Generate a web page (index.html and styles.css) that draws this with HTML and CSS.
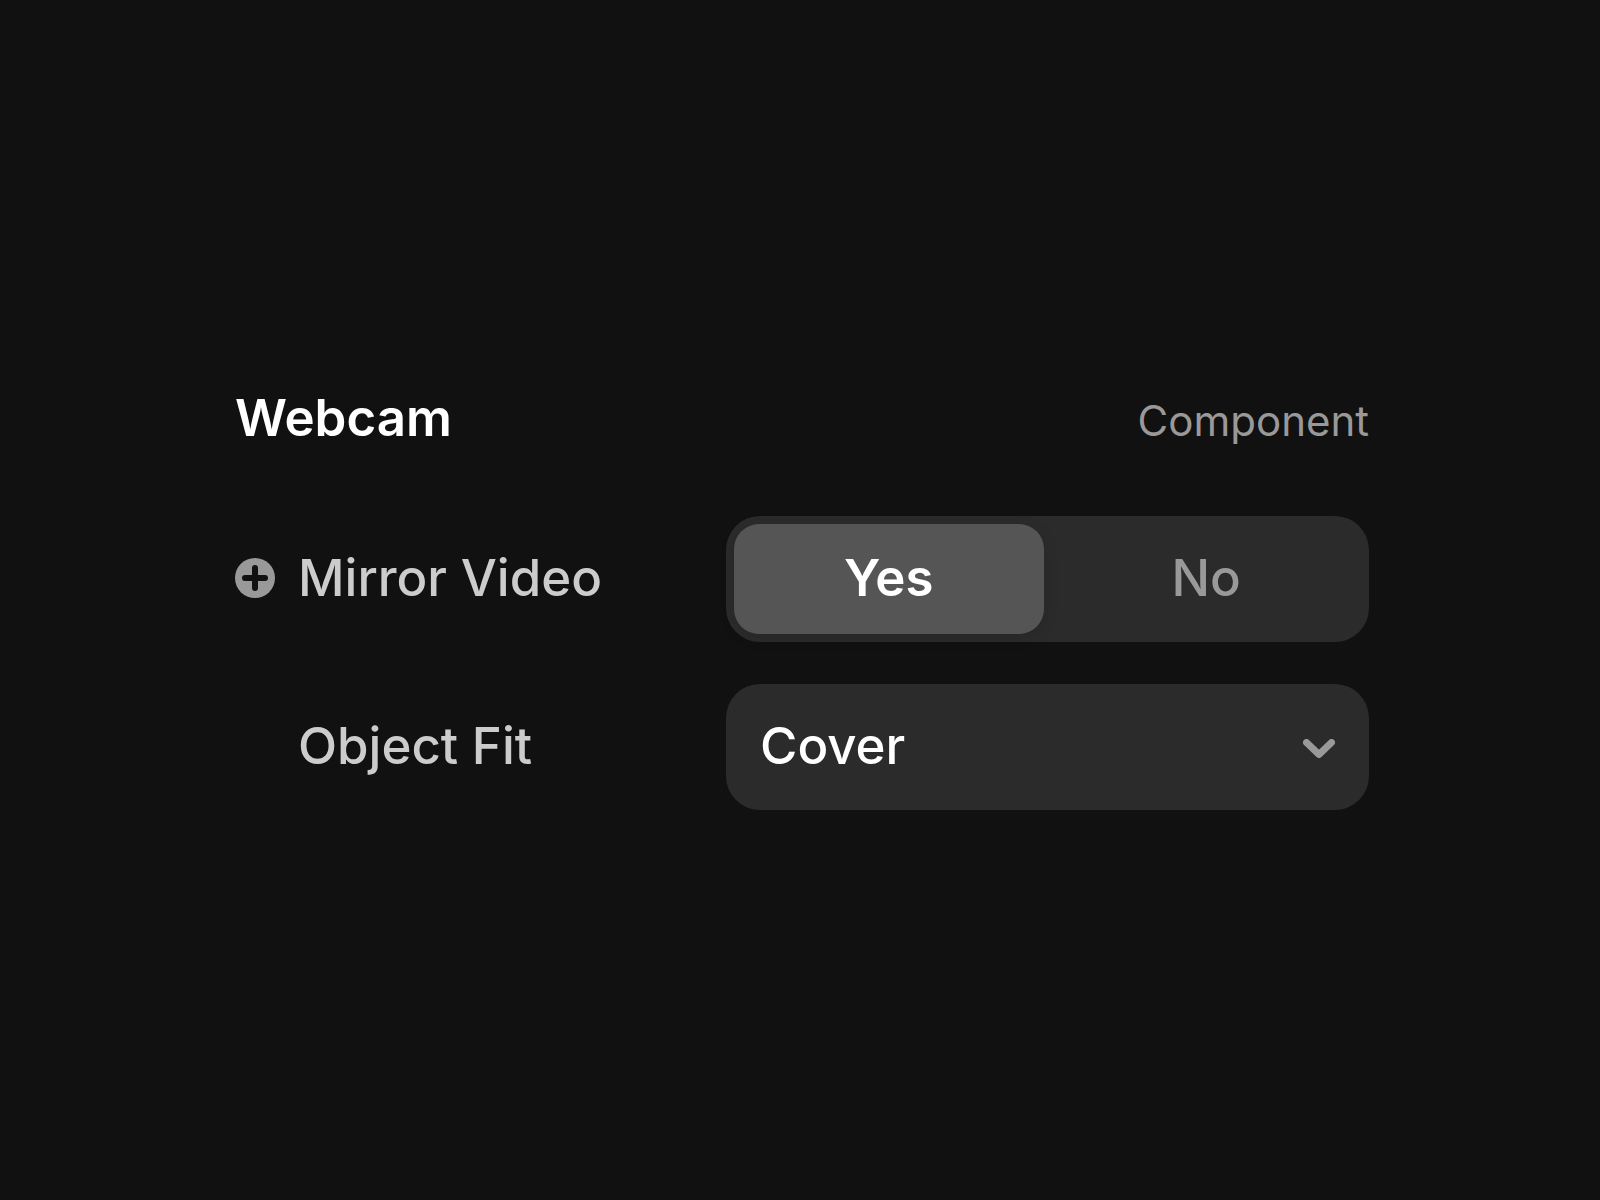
FILE: index.html
```html
<!DOCTYPE html>
<html lang="en">
<head>
    <meta charset="UTF-8">
    <meta name="viewport" content="width=device-width, initial-scale=1.0">
    <title>Webcam</title>
    <link rel="stylesheet" href="styles.css">
</head>
<body>
    <form class="panel">
        <!-- Header -->
        <header class="panel-header">
            <h1 class="panel-title">Webcam</h1>
            <span class="panel-type">Component</span>
        </header>

        <!-- Mirror Video -->
        <div class="row" role="radiogroup" aria-labelledby="mirrorLabel">
            <button type="button" class="add-btn" aria-label="Add variable">
                <svg class="add-icon" viewBox="0 0 40 40">
                    <circle cx="20" cy="20" r="20" fill="#999"/>
                    <path d="M20 10V30M10 20H30" stroke="#111" stroke-width="6" stroke-linecap="round"/>
                </svg>
            </button>
            <span id="mirrorLabel" class="row-label">Mirror Video</span>
            <div class="segmented">
                <label class="segment">
                    <input type="radio" name="mirror" value="yes" checked>
                    <span>Yes</span>
                </label>
                <label class="segment">
                    <input type="radio" name="mirror" value="no">
                    <span>No</span>
                </label>
            </div>
        </div>

        <!-- Object Fit -->
        <div class="row">
            <label for="objectFit" class="row-label">Object Fit</label>
            <div class="select-wrap">
                <select id="objectFit" class="select">
                    <option>Cover</option>
                    <option>Contain</option>
                    <option>Fill</option>
                    <option>None</option>
                </select>
                <svg class="chevron" viewBox="0 0 32 20" aria-hidden="true">
                    <path d="M3.500 3.500L16 15.500L28.500 3.500" fill="none" stroke="#999" stroke-width="7" stroke-linecap="round" stroke-linejoin="round"/>
                </svg>
            </div>
        </div>
    </form>
</body>
</html>
```

FILE: styles.css
```css
* {
    margin: 0;
    padding: 0;
    box-sizing: border-box;
}
body {
    display: flex;
    align-items: center;
    justify-content: center;
    min-height: 100vh;
    background-color: #111;
    color: #fff;
    font-family: Inter, "Liberation Sans", sans-serif;
    font-size: 51px;
    font-weight: 500;
    line-height: 60px;
}
.panel {
    width: 100%;
    max-width: 1138px;
    padding: 0 0 2px 4px;
}
.panel-header {
    display: flex;
    align-items: baseline;
    justify-content: space-between;
    height: 60px;
    margin-bottom: 68px;
}
.panel-title {
    font-size: 51px;
    font-weight: 600;
}
.panel-type {
    color: #999;
    font-size: 42px;
    font-weight: 400;
}
.row {
    display: grid;
    grid-template-columns: 40px 1fr 643px;
    align-items: center;
}
.row + .row {
    margin-top: 42px;
}
.row-label {
    grid-column: 2;
    padding: 0 0 2px 23px;
    color: #ccc;
}
.add-btn {
    width: 40px;
    height: 40px;
    margin-bottom: 2px;
    border: none;
    border-radius: 50%;
    background: none;
    cursor: pointer;
}
.add-icon {
    display: block;
    width: 100%;
}
.segmented {
    display: flex;
    gap: 8px;
    height: 126px;
    padding: 8px;
    border-radius: 34px;
    background-color: #2b2b2b;
}
.segment {
    display: flex;
    flex: 1;
    align-items: center;
    justify-content: center;
    padding-bottom: 2px;
    border-radius: 25px;
    color: #999;
    cursor: pointer;
}
.segment input {
    appearance: none;
}
.segment:has(input:checked) {
    background-color: #555;
    box-shadow: 0 4px 16px rgba(0, 0, 0, 0.1);
    color: #fff;
    font-weight: 600;
}
.select-wrap {
    display: grid;
    align-items: center;
}
.select,
.chevron {
    grid-area: 1 / 1;
}
.select {
    appearance: none;
    width: 100%;
    height: 126px;
    padding: 0 80px 2px 34px;
    border: none;
    border-radius: 34px;
    background-color: #2b2b2b;
    color: #fff;
    font: inherit;
    cursor: pointer;
}
.chevron {
    justify-self: end;
    width: 32px;
    height: 20px;
    margin: 4px 34px 0 0;
    pointer-events: none;
}
```
